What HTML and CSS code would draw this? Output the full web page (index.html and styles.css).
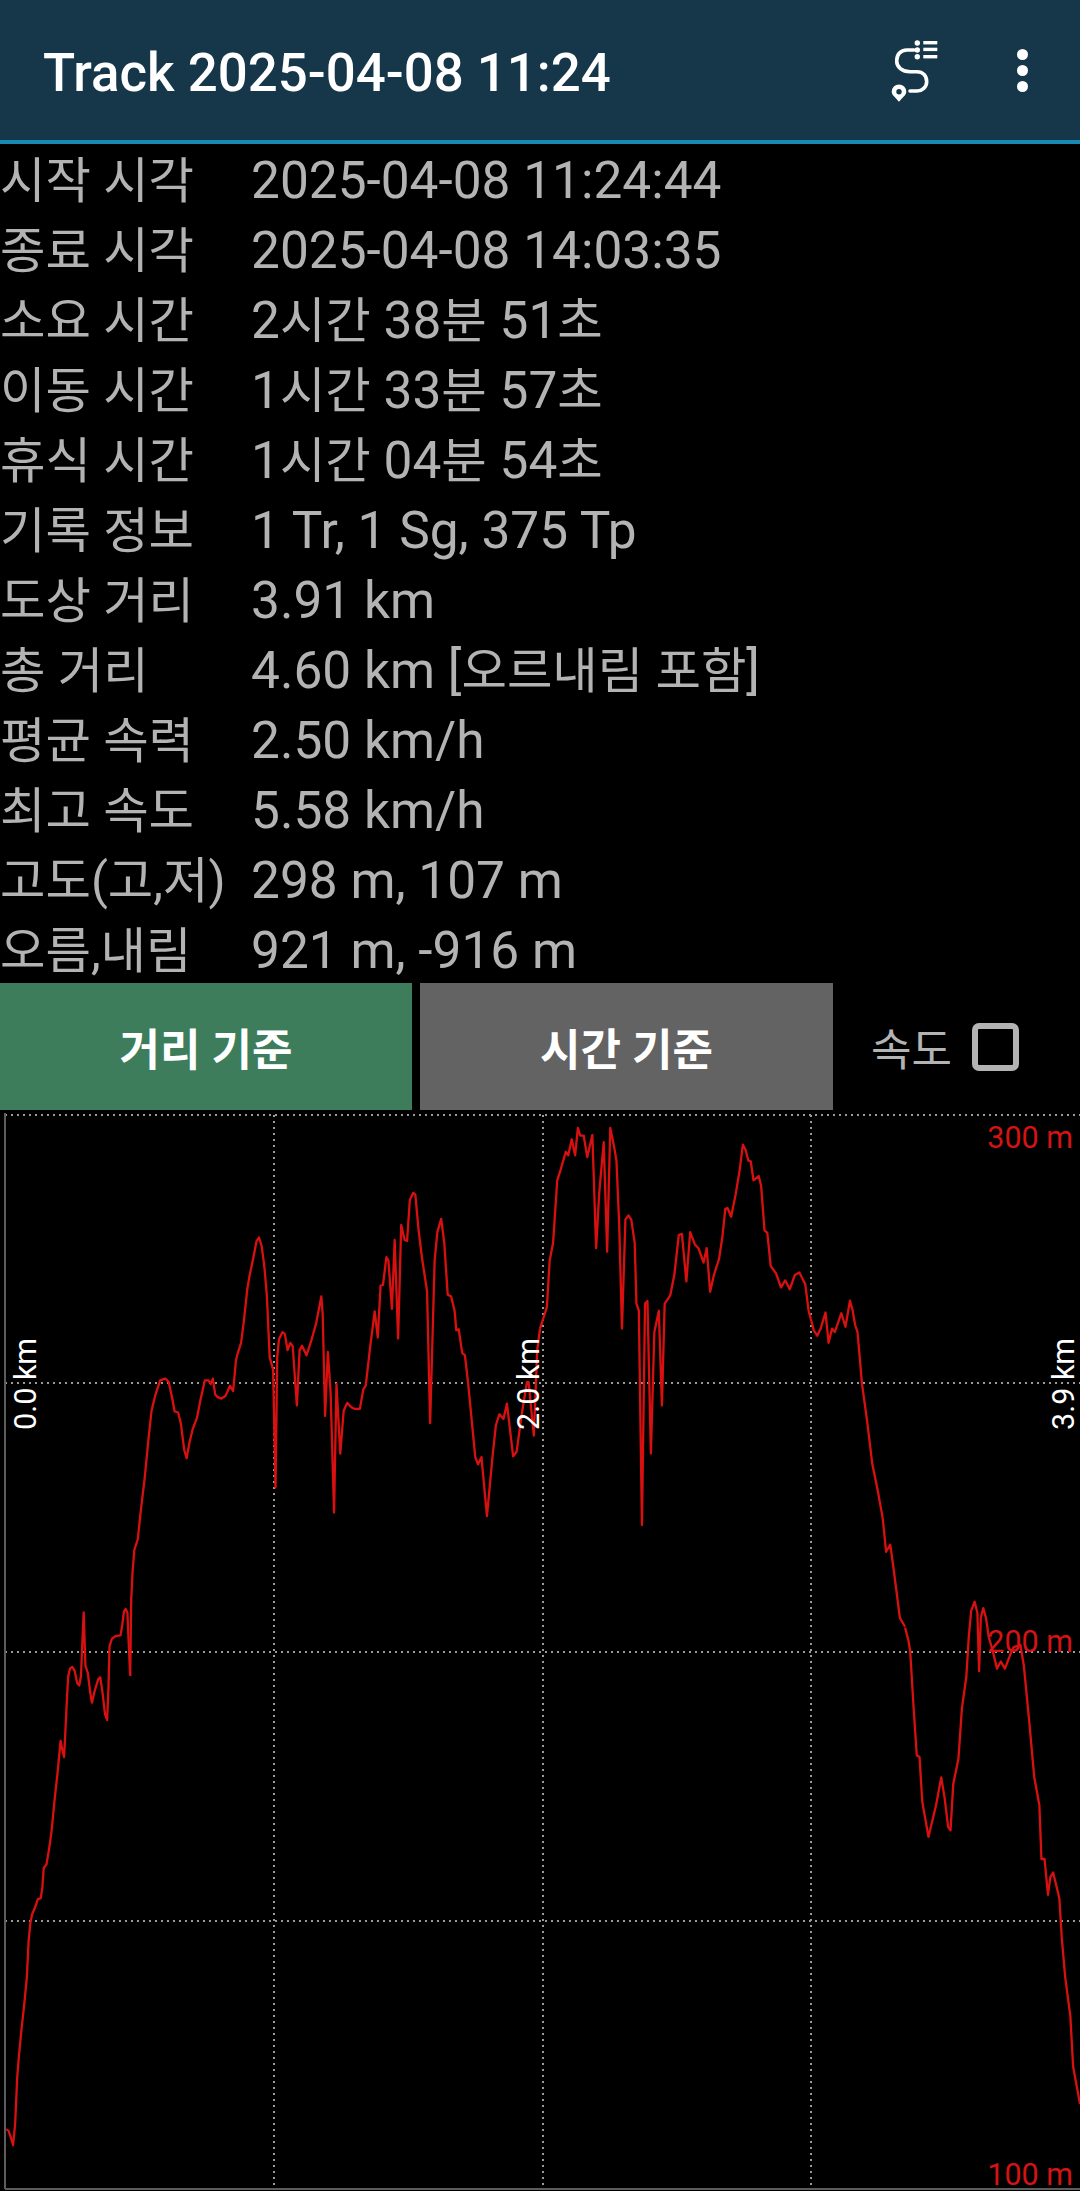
FILE: index.html
```html
<!DOCTYPE html>
<html>
<head>
  <title>Track 2025-04-08 11:24</title>
  <link rel="stylesheet" href="styles.css">
</head>
<body>
  <header class="toolbar">
    <h1 class="toolbar-title">Track 2025-04-08 11:24</h1>
    <svg class="icon-route" viewBox="0 0 70 70">
      <path class="route-line" d="M29 15H22C15 15 11.700 20 11.700 26C11.700 32 17 36.700 25 36.700H32C38 36.700 41.700 41 41.700 46.700C41.700 52 37 56 32 56H25"/>
      <circle class="route-fill" cx="32.300" cy="8" r="2.700"/>
      <circle class="route-fill" cx="32.300" cy="15" r="2.700"/>
      <circle class="route-fill" cx="32.300" cy="21.700" r="2.700"/>
      <rect class="route-fill" x="38.300" y="6" width="14" height="3.400"/>
      <rect class="route-fill" x="38.300" y="12.700" width="14" height="3.400"/>
      <rect class="route-fill" x="38.300" y="20" width="14" height="3.400"/>
      <path class="route-fill route-pin" d="M14 49.400A7.300 7.300 0 0 1 21.300 56.700C21.300 60 17 63 14 66.700C11 63 6.700 60 6.700 56.700A7.300 7.300 0 0 1 14 49.400ZM14 54A2.700 2.700 0 1 0 14 59.400A2.700 2.700 0 1 0 14 54Z"/>
    </svg>
    <div class="icon-more">
      <span class="more-dot"></span>
      <span class="more-dot"></span>
      <span class="more-dot"></span>
    </div>
  </header>

  <section class="info">
    <div class="info-row"><span class="ko">시작 시각</span><span>2025-04-08 11:24:44</span></div>
    <div class="info-row"><span class="ko">종료 시각</span><span>2025-04-08 14:03:35</span></div>
    <div class="info-row"><span class="ko">소요 시간</span><span>2<span class="ko">시간</span> 38<span class="ko">분</span> 51<span class="ko">초</span></span></div>
    <div class="info-row"><span class="ko">이동 시간</span><span>1<span class="ko">시간</span> 33<span class="ko">분</span> 57<span class="ko">초</span></span></div>
    <div class="info-row"><span class="ko">휴식 시간</span><span>1<span class="ko">시간</span> 04<span class="ko">분</span> 54<span class="ko">초</span></span></div>
    <div class="info-row"><span class="ko">기록 정보</span><span>1 Tr, 1 Sg, 375 Tp</span></div>
    <div class="info-row"><span class="ko">도상 거리</span><span>3.91 km</span></div>
    <div class="info-row"><span class="ko">총 거리</span><span>4.60 km [<span class="ko">오르내림 포함</span>]</span></div>
    <div class="info-row"><span class="ko">평균 속력</span><span>2.50 km/h</span></div>
    <div class="info-row"><span class="ko">최고 속도</span><span>5.58 km/h</span></div>
    <div class="info-row"><span class="ko">고도(고,저)</span><span>298 m, 107 m</span></div>
    <div class="info-row"><span class="ko">오름,내림</span><span>921 m, -916 m</span></div>
  </section>

  <div class="controls">
    <button class="tab tab-active">거리 기준</button>
    <button class="tab tab-idle">시간 기준</button>
    <label class="speed-check">속도<span class="check-box"></span></label>
  </div>

  <svg class="chart" viewBox="0 1110 1080 1081">
    <!-- grid -->
    <line class="grid" x1="5" y1="1115" x2="1080" y2="1115"/>
    <line class="grid" x1="5" y1="1383" x2="1080" y2="1383"/>
    <line class="grid" x1="5" y1="1652" x2="1080" y2="1652"/>
    <line class="grid" x1="5" y1="1921" x2="1080" y2="1921"/>
    <line class="grid" x1="274" y1="1115" x2="274" y2="2189"/>
    <line class="grid" x1="543" y1="1115" x2="543" y2="2189"/>
    <line class="grid" x1="811" y1="1115" x2="811" y2="2189"/>
    <line class="axis" x1="5" y1="1113" x2="5" y2="2189"/>
    <line class="axis" x1="5" y1="2189" x2="1080" y2="2189"/>

    <!-- elevation track, traced in four quarters -->
    <g transform="translate(0,1630) scale(.34439,.35778)">
      <polyline class="track" points="18,1395 25,1400 32,1420 38,1440 44,1380 50,1250 55,1190 62,1120 70,1050 78,970 83,870 88,820 93,795 100,780 110,752 118,750 123,720 127,665 135,655 142,615 150,560 158,480 167,400 176,310 181,335 186,355 190,280 195,180 198,130 203,108 210,103 217,115 224,148 230,155 235,130 238,60 243,-49 248,100 255,120 262,175 267,203 275,170 285,138 291,132 297,170 305,235 311,252 315,160 318,45 325,25 335,17 350,15 355,-14 360,-52 365,-59 370,-48 372,0 378,128"/>
    </g>
    <g transform="translate(0,1100) scale(.34439,.35714)">
      <polyline class="track" points="378,1612 381,1400 385,1320 390,1260 400,1230 410,1140 420,1060 430,960 440,870 450,830 465,785 480,780 490,790 500,835 507,872 517,875 525,905 535,980 542,1003 550,960 560,920 572,890 582,840 595,785 605,785 612,795 618,780 625,825 632,832 643,836 655,828 668,800 677,815 685,730 690,710 700,680 708,620 718,530 725,490 735,445 745,395 752,385 760,410 768,470 775,550 783,720 793,755 800,1085 805,720 810,670 820,650 827,655 835,700 843,680 850,690 862,855 870,700 877,688 890,715 905,670 918,625 933,550 937,600 944,885 952,705 960,820 970,1155 977,795 988,990 998,870 1008,848 1020,860 1030,865 1045,865 1055,810 1062,800 1075,690 1088,592 1097,665 1105,520 1112,518 1122,440 1128,450 1138,585 1146,392 1156,668 1165,350 1175,392 1182,395 1190,280 1200,260 1206,265 1215,360 1225,440 1240,535 1249,905 1262,450 1270,370 1281,333 1290,400 1300,545 1310,550 1320,590 1325,645 1332,642 1342,708 1350,715 1360,800 1370,900 1380,1000 1388,1020 1398,1000 1414,1165 1430,1000 1440,910 1450,880 1462,893 1472,850 1490,998 1500,985 1515,880 1530,790 1535,790 1550,940 1560,700 1568,640"/>
    </g>
    <g transform="translate(540,1100) scale(.34439,.35714)">
      <polyline class="track" points="0,640 10,610 20,580 28,450 38,400 50,225 60,195 75,145 82,155 92,110 102,155 110,78 117,100 127,100 137,160 152,98 163,415 172,260 185,118 195,425 204,78 215,130 222,170 230,350 238,640 248,335 257,323 265,335 275,400 280,570 287,590 296,1190 305,570 312,563 322,990 332,650 345,590 354,855 362,570 378,548 390,490 403,378 412,375 425,508 436,370 450,405 460,415 475,455 484,415 494,537 505,490 520,445 530,380 538,305 545,303 555,327 568,265 580,195 589,125 597,140 605,170 612,172 620,225 635,213 642,240 652,365 660,372 670,465 685,485 700,525 712,505 725,530 740,490 753,483 770,515 780,590 795,645 805,660 815,640 829,595 838,680 848,640 856,650 875,597 887,635 900,562 908,590 915,630 922,650 935,795 950,900 965,1020 980,1090 995,1170 1005,1265 1017,1245 1025,1300 1045,1450 1060,1475"/>
    </g>
    <g transform="translate(540,1630) scale(.34439,.35778)">
      <polyline class="track" points="1060,-7 1070,30 1075,60 1085,220 1094,350 1102,355 1110,480 1128,578 1150,490 1165,412 1175,470 1185,550 1192,560 1200,430 1215,360 1225,220 1238,130 1245,20 1252,-54 1262,-79 1270,-48 1275,115 1280,-34 1287,-61 1295,-34 1303,20 1315,60 1327,108 1338,88 1350,108 1365,70 1375,48 1395,42 1405,100 1420,250 1435,410 1450,490 1456,640 1465,640 1475,740 1482,690 1490,678 1508,750 1515,860 1525,970 1540,1080 1548,1220 1568,1325"/>
    </g>

    <!-- labels -->
    <text class="label-km" transform="translate(36,1430) rotate(-90)">0.0 km</text>
    <text class="label-km" transform="translate(539,1430) rotate(-90)">2.0 km</text>
    <text class="label-km" transform="translate(1074,1430) rotate(-90)">3.9 km</text>
    <text class="label-m" x="1073" y="1148">300 m</text>
    <text class="label-m" x="1073" y="1652">200 m</text>
    <text class="label-m" x="1073" y="2185">100 m</text>
  </svg>
</body>
</html>
```

FILE: styles.css
```css
body {
  font-family: Roboto, "Noto Sans CJK KR", sans-serif;
  background-color: #000;
  margin: 0;
  padding: 0;
  width: 1080px;
  height: 2191px;
  overflow: hidden;
}

.toolbar {
  display: flex;
  align-items: center;
  height: 140px;
  background-color: #16364a;
  border-bottom: 4px solid #1a8ab5;
  padding-left: 43px;
}

.toolbar-title {
  flex: 1;
  margin: 0;
  padding-top: 6px;
  color: #fff;
  font-size: 52.800px;
  font-weight: 500;
  line-height: 134px;
}

.icon-route {
  width: 70px;
  height: 70px;
  margin-right: 62px;
  overflow: visible;
}

.route-line {
  fill: none;
  stroke: #fff;
  stroke-width: 3.6;
  stroke-linecap: round;
}

.route-fill {
  fill: #fff;
}

.route-pin {
  fill-rule: evenodd;
}

.icon-more {
  display: flex;
  flex-direction: column;
  gap: 5px;
  margin-right: 52px;
}

.more-dot {
  width: 11px;
  height: 11px;
  border-radius: 50%;
  background-color: #fff;
}

.info {
  height: 839px;
  padding-top: 2px;
  margin-bottom: -2px;
}

.info-row {
  display: grid;
  grid-template-columns: 251px 1fr;
  height: 70px;
  color: #b3b3b3;
  font-size: 51.400px;
  line-height: 70px;
  white-space: nowrap;
}

.ko {
  font-size: 49.400px;
}

.controls {
  display: flex;
  height: 127px;
}

.tab {
  width: 412px;
  height: 127px;
  margin: 0 8px 0 0;
  padding: 0;
  border: none;
  color: #fff;
  font-family: inherit;
  font-size: 44px;
  font-weight: 700;
}

.tab-active {
  background-color: #3d7d5b;
}

.tab-idle {
  width: 413px;
  background-color: #636363;
}

.speed-check {
  display: flex;
  align-items: center;
  margin-left: 30px;
  gap: 20px;
  color: #b3b3b3;
  font-size: 44px;
}

.check-box {
  box-sizing: border-box;
  width: 47px;
  height: 48px;
  border: 6px solid #b3b3b3;
  border-radius: 7px;
}

.chart {
  display: block;
  width: 1080px;
  height: 1081px;
}

.grid {
  stroke: #9a9a9a;
  stroke-width: 2;
  stroke-dasharray: 2 4;
}

.axis {
  stroke: #5c5c5c;
  stroke-width: 2;
}

.track {
  fill: none;
  stroke: #d91010;
  stroke-width: 2.300;
  stroke-linejoin: round;
  vector-effect: non-scaling-stroke;
}

.label-km {
  fill: #fff;
  font-size: 30.500px;
}

.label-m {
  fill: #d41414;
  font-size: 30.500px;
  text-anchor: end;
}
```
